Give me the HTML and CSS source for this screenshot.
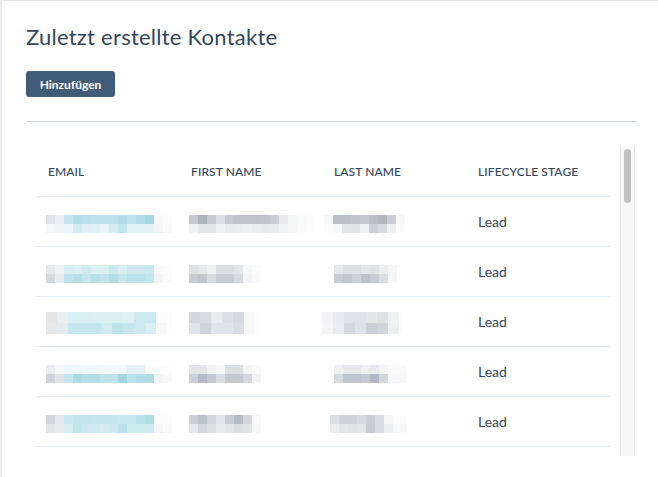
FILE: index.html
```html
<!DOCTYPE html>
<html lang="de">
<head>
<meta charset="utf-8">
<title>Zuletzt erstellte Kontakte</title>
<link rel="stylesheet" href="styles.css">
</head>
<body>
<div class="page">
  <h1 class="title">Zuletzt erstellte Kontakte</h1>
  <button class="btn">Hinzufügen</button>
  <div class="divider"></div>
  <div class="table-wrap">
    <div class="table">
      <div class="row head">
        <div class="cell">EMAIL</div>
        <div class="cell">FIRST NAME</div>
        <div class="cell">LAST NAME</div>
        <div class="cell">LIFECYCLE STAGE</div>
      </div>
      <div class="row">
        <div class="cell"><div class="blur e1"></div></div>
        <div class="cell"><div class="blur f1"></div></div>
        <div class="cell"><div class="blur l1"></div></div>
        <div class="cell">Lead</div>
      </div>
      <div class="row">
        <div class="cell"><div class="blur e2"></div></div>
        <div class="cell"><div class="blur f2"></div></div>
        <div class="cell"><div class="blur l2"></div></div>
        <div class="cell">Lead</div>
      </div>
      <div class="row">
        <div class="cell"><div class="blur tall e3"></div></div>
        <div class="cell"><div class="blur tall f3"></div></div>
        <div class="cell"><div class="blur tall l3"></div></div>
        <div class="cell">Lead</div>
      </div>
      <div class="row">
        <div class="cell"><div class="blur e4"></div></div>
        <div class="cell"><div class="blur f4"></div></div>
        <div class="cell"><div class="blur l4"></div></div>
        <div class="cell">Lead</div>
      </div>
      <div class="row">
        <div class="cell"><div class="blur e5"></div></div>
        <div class="cell"><div class="blur f5"></div></div>
        <div class="cell"><div class="blur l5"></div></div>
        <div class="cell">Lead</div>
      </div>
    </div>
    <div class="scrollbar"><div class="thumb"></div></div>
  </div>
</div>
</body>
</html>
```

FILE: styles.css
```css
html, body {
  margin: 0;
  padding: 0;
  background: #ffffff;
}
body {
  font-family: Lato, "Open Sans", "Liberation Sans", sans-serif;
  color: #33475b;
}
.page {
  height: 477px;
  box-sizing: border-box;
  border-left: 2px solid #ebebf1;
  border-top: 1px solid #e4e5e8;
  padding: 0 22px 0 24px;
  overflow: hidden;
}
.title {
  margin: 22px 0 0 0;
  font-size: 22px;
  line-height: 28px;
  font-weight: 400;
  letter-spacing: 0.25px;
  color: #33475b;
}
.btn {
  display: block;
  margin-top: 20px;
  width: 89px;
  height: 26px;
  padding: 0;
  border: none;
  border-radius: 3px;
  background: #425b76;
  color: #ffffff;
  font-family: Lato, "Open Sans", "Liberation Sans", sans-serif;
  font-size: 12px;
  font-weight: 700;
}
.divider {
  margin-top: 24px;
  height: 1px;
  background: #cbd6e2;
}
.table-wrap {
  margin: 24px 0 0 10px;
  height: 310px;
  display: flex;
  overflow: hidden;
}
.table {
  width: 574px;
  flex: none;
}
.row {
  display: grid;
  grid-template-columns: 143px 143px 144px 144px;
  height: 49px;
  border-bottom: 1px solid #e5edf4;
  align-items: center;
  font-size: 14px;
}
.row.head {
  height: 50px;
  font-size: 12px;
  font-weight: 500;
  letter-spacing: 0.1px;
}
.cell {
  padding-left: 12px;
  white-space: nowrap;
}
.blur {
  height: 18px;
  margin-left: -2px;
  margin-top: 5px;
  background-repeat: no-repeat;
  background-size: 100% 9px;
}
.blur.tall {
  height: 22px;
  margin-top: 2px;
  background-size: 100% 11px;
}
/* email cells */
.e1 {
  width: 126px;
  background-image:
    linear-gradient(90deg, #dfe2e6 0 9px, #eceef1 9px 18px, #c4e5ec 18px 27px, #b3dee7 27px 36px, #b8e0e8 36px 45px, #bbe1e9 45px 54px, #bbe1e9 54px 63px, #bce2e9 63px 72px, #b2dde7 72px 81px, #bfe3ea 81px 90px, #b0dde6 90px 99px, #a6d8e2 99px 108px, #f8f8f9 108px 117px, #fbfbfb 117px 126px),
    linear-gradient(90deg, #f5f6f7 0 9px, #f3f4f5 9px 18px, #e9f4f7 18px 27px, #d3ecf1 27px 36px, #e0f0f4 36px 45px, #e2f1f5 45px 54px, #e9f5f7 54px 63px, #d5edf2 63px 72px, #c2e5ec 72px 81px, #e6f3f6 81px 90px, #e6f3f6 90px 99px, #e6f3f6 99px 108px, #f4f4f4 108px 117px, #fafafa 117px 126px);
  background-position: 0 0, 0 9px;
}
.e2 {
  width: 126px;
  background-image:
    linear-gradient(90deg, #e4e6e9 0 9px, #f0f1f3 9px 18px, #d4edf2 18px 27px, #d9eff4 27px 36px, #cfeaf0 36px 45px, #d9eff4 45px 54px, #d9eff4 54px 63px, #c9e8ee 63px 72px, #d9eff4 72px 81px, #cde9ef 81px 90px, #cde9ef 90px 99px, #c8e7ee 99px 108px, #fafafa 108px 117px, #fcfcfc 117px 126px),
    linear-gradient(90deg, #d5d8dd 0 9px, #e8eaed 9px 18px, #bfe3ea 18px 27px, #b6dfe7 27px 36px, #c4e5ec 36px 45px, #b6dfe7 45px 54px, #bfe3ea 54px 63px, #b0dce6 63px 72px, #c4e5ec 72px 81px, #b9e1e9 81px 90px, #b9e1e9 90px 99px, #c2e4eb 99px 108px, #f4f4f5 108px 117px, #fafafa 117px 126px);
  background-position: 0 0, 0 9px;
}
.e3 {
  width: 126px;
  background-image:
    linear-gradient(90deg, #e3e4e6 0 11px, #e8eef1 11px 22px, #d8eff4 22px 33px, #d8eff4 33px 44px, #dcf0f4 44px 55px, #dcf0f4 55px 66px, #dcf0f4 66px 77px, #e0f1f5 77px 88px, #cce9ef 88px 99px, #cce9ef 99px 110px, #fcfcfc 110px 126px),
    linear-gradient(90deg, #e6e7e9 0 11px, #e4ebee 11px 22px, #c6e6ed 22px 33px, #c6e6ed 33px 44px, #c6e6ed 44px 55px, #d0eaf0 55px 66px, #b9e2ea 66px 77px, #c6e6ed 77px 88px, #cde9ef 88px 99px, #d8eef3 99px 110px, #f7f7f7 110px 121px, #fcfcfc 121px 126px);
  background-position: 0 0, 0 11px;
}
.e4 {
  width: 126px;
  background-image:
    linear-gradient(90deg, #e9ebee 0 9px, #f5f6f7 9px 18px, #eef8fa 18px 27px, #eef8fa 27px 36px, #f0f8fa 36px 45px, #f0f8fa 45px 54px, #f3f9fb 54px 63px, #f3f9fb 63px 72px, #f1f8fa 72px 81px, #e3f2f6 81px 90px, #e3f2f6 90px 99px, #fcfcfc 99px 126px),
    linear-gradient(90deg, #cdd2d8 0 9px, #e2e5e8 9px 18px, #c4e6ed 18px 27px, #acdbe5 27px 36px, #b5dfe8 36px 45px, #b5dfe8 45px 54px, #bde2ea 54px 63px, #bde2ea 63px 72px, #a2d6e1 72px 81px, #bde3ea 81px 90px, #b0dde6 90px 99px, #aedce5 99px 108px, #f3f4f5 108px 117px, #f9f9f9 117px 126px);
  background-position: 0 0, 0 9px;
}
.e5 {
  width: 126px;
  background-image:
    linear-gradient(90deg, #d3d6db 0 9px, #e6e9ec 9px 18px, #c9e8ee 18px 27px, #c3e5ec 27px 36px, #c3e5ec 36px 45px, #c5e6ed 45px 54px, #c5e6ed 54px 63px, #c5e6ed 63px 72px, #c9e8ee 72px 81px, #c9e8ee 81px 90px, #b8e1ea 90px 99px, #b0dde6 99px 108px, #fbfbfb 108px 126px),
    linear-gradient(90deg, #e3e6e9 0 9px, #e8eaec 9px 18px, #d7eff4 18px 27px, #c0e4eb 27px 36px, #cde9ef 36px 45px, #cde9ef 45px 54px, #d5edf2 54px 63px, #cde9ef 63px 72px, #b8e1ea 72px 81px, #d0ebf0 81px 90px, #d0ebf0 90px 99px, #d0ebf0 99px 108px, #f4f4f5 108px 117px, #fafafa 117px 126px);
  background-position: 0 0, 0 9px;
}
/* first name cells */
.f1 {
  width: 126px;
  background-image:
    linear-gradient(90deg, #c5c8cf 0 9px, #adb4bc 9px 18px, #c6cad1 18px 27px, #dcdfe3 27px 36px, #c5c9d1 36px 45px, #bec3cb 45px 54px, #bec3cb 54px 63px, #bec3cb 63px 72px, #bfc4cc 72px 81px, #c9cdd4 81px 90px, #e7e9ec 90px 99px, #f6f7f7 99px 108px, #f9f9fa 108px 117px, #fbfbfb 117px 126px),
    linear-gradient(90deg, #f1f2f3 0 9px, #e4e6e9 9px 18px, #e4e6e9 18px 27px, #eff0f2 27px 36px, #e8eaec 36px 45px, #eaebee 45px 54px, #eff0f2 54px 63px, #ebecee 63px 72px, #e7e9ec 72px 81px, #e8eaec 81px 90px, #f0f1f2 90px 99px, #f6f6f7 99px 108px, #fafafa 108px 117px, #fcfcfc 117px 126px);
  background-position: 0 0, 0 9px;
}
.f2 {
  width: 72px;
  background-image:
    linear-gradient(90deg, #dfe2e5 0 9px, #e4e6e9 9px 18px, #f1f2f3 18px 27px, #dadde1 27px 36px, #dadde1 36px 45px, #e3e5e8 45px 54px, #f5f6f6 54px 63px, #fbfbfb 63px 72px),
    linear-gradient(90deg, #c9cdd3 0 9px, #c2c7ce 9px 18px, #d9dce0 18px 27px, #c7cbd2 27px 36px, #c7cbd2 36px 45px, #d6d9de 45px 54px, #f2f3f4 54px 63px, #fafafa 63px 72px);
  background-position: 0 0, 0 9px;
}
.f3 {
  width: 72px;
  background-image:
    linear-gradient(90deg, #d3d6db 0 11px, #d8dbe0 11px 22px, #e9ebee 22px 33px, #dcdfe3 33px 44px, #d6d9de 44px 55px, #f8f8f9 55px 66px, #fcfcfc 66px 72px),
    linear-gradient(90deg, #dfe2e6 0 11px, #d0d4da 11px 22px, #e0e3e7 22px 33px, #e0e3e7 33px 44px, #d9dce1 44px 55px, #f7f7f8 55px 66px, #fcfcfc 66px 72px);
  background-position: 0 0, 0 11px;
}
.f4 {
  width: 72px;
  background-image:
    linear-gradient(90deg, #e3e5e8 0 9px, #e3e5e8 9px 18px, #f3f3f4 18px 27px, #f6f7f7 27px 36px, #dcdfe2 36px 45px, #dcdfe2 45px 54px, #f3f4f5 54px 63px, #fafafa 63px 72px),
    linear-gradient(90deg, #cbd0d6 0 9px, #b6bcc5 9px 18px, #c4c9cf 18px 27px, #d9dce0 27px 36px, #c4c9d0 36px 45px, #c4c9d0 45px 54px, #d3d6dc 54px 63px, #f3f4f5 63px 72px);
  background-position: 0 0, 0 9px;
}
.f5 {
  width: 72px;
  background-image:
    linear-gradient(90deg, #ccd0d6 0 9px, #bcc2ca 9px 18px, #d2d5da 18px 27px, #e2e4e7 27px 36px, #c8ccd3 36px 45px, #b6bdc5 45px 54px, #d4d7dc 54px 63px, #f9f9f9 63px 72px),
    linear-gradient(90deg, #e5e7ea 0 9px, #d3d6db 9px 18px, #dcdfe2 18px 27px, #e9eaed 27px 36px, #e3e5e8 36px 45px, #dcdfe2 45px 54px, #e1e3e6 54px 63px, #f8f8f8 63px 72px);
  background-position: 0 0, 0 9px;
}
/* last name cells */
.l1 {
  width: 81px;
  margin-left: -10px;
  background-image:
    linear-gradient(90deg, #f6f7f8 0 9px, #bbc1c9 9px 18px, #bbc1c9 18px 27px, #bfc5cc 27px 36px, #c3c8cf 36px 45px, #b9bfc7 45px 54px, #b1b8c0 54px 63px, #cacdd4 63px 72px, #f7f8f8 72px 81px),
    linear-gradient(90deg, #fbfbfb 0 9px, #f5f6f7 9px 18px, #e2e4e8 18px 27px, #e1e3e7 27px 36px, #eef0f1 36px 45px, #cbcfd5 45px 54px, #d7dadf 54px 63px, #eeeff1 63px 72px, #fbfbfb 72px 81px);
  background-position: 0 0, 0 9px;
}
.l2 {
  width: 63px;
  margin-left: 0;
  background-image:
    linear-gradient(90deg, #e6e8eb 0 9px, #dcdfe3 9px 18px, #dcdfe3 18px 27px, #e4e6e9 27px 36px, #e0e2e6 36px 45px, #eceef0 45px 54px, #f8f8f9 54px 63px),
    linear-gradient(90deg, #c9cdd3 0 9px, #c2c7cd 9px 18px, #cdd1d7 18px 27px, #bfc4cb 27px 36px, #c8ccd2 36px 45px, #d9dce0 45px 54px, #f6f6f7 54px 63px);
  background-position: 0 0, 0 9px;
}
.l3 {
  width: 81px;
  margin-left: -12px;
  background-image:
    linear-gradient(90deg, #f3f3f5 0 11px, #e8eaed 11px 22px, #dfe2e6 22px 33px, #dfe2e6 33px 44px, #e5e7ea 44px 55px, #dde0e4 55px 66px, #f0f1f2 66px 77px, #fcfcfc 77px 81px),
    linear-gradient(90deg, #f5f5f6 0 11px, #e9ebee 11px 22px, #d5d8dd 22px 33px, #dfe2e6 33px 44px, #ccd0d6 44px 55px, #d1d5da 55px 66px, #eeeff1 66px 77px, #fcfcfc 77px 81px);
  background-position: 0 0, 0 11px;
}
.l4 {
  width: 72px;
  margin-left: 0;
  background-image:
    linear-gradient(90deg, #eff0f2 0 9px, #e6e8eb 9px 18px, #e6e8eb 18px 27px, #eceef0 27px 36px, #e7e9ec 36px 45px, #f6f6f7 45px 54px, #fafafa 54px 72px),
    linear-gradient(90deg, #d7dade 0 9px, #c0c6cd 9px 18px, #c0c6cd 18px 27px, #c5cad0 27px 36px, #b3bac3 36px 45px, #d3d7dc 45px 54px, #f8f8f8 54px 72px);
  background-position: 0 0, 0 9px;
}
.l5 {
  width: 77px;
  margin-left: -4px;
  background-image:
    linear-gradient(90deg, #dcdfe3 0 9px, #cfd3d8 9px 18px, #cfd3d8 18px 27px, #d6d9de 27px 36px, #cbcfd5 36px 45px, #d9dce0 45px 54px, #f8f8f8 54px 63px, #fcfcfc 63px 77px),
    linear-gradient(90deg, #eceef0 0 9px, #e3e5e8 9px 18px, #e0e3e6 18px 27px, #e3e5e8 27px 36px, #c6cad1 36px 45px, #d9dce0 45px 54px, #eeeff1 54px 63px, #f8f8f8 63px 77px);
  background-position: 0 0, 0 9px;
}
.scrollbar {
  flex: none;
  width: 15px;
  margin-left: 10px;
  box-sizing: border-box;
  background: #f8f8f8;
  border-left: 1px solid #e8e8e8;
  border-right: 1px solid #e8e8e8;
  padding: 3px 3px 0 3px;
}
.thumb {
  height: 54px;
  border-radius: 4px;
  background: #c1c1c1;
}
```
